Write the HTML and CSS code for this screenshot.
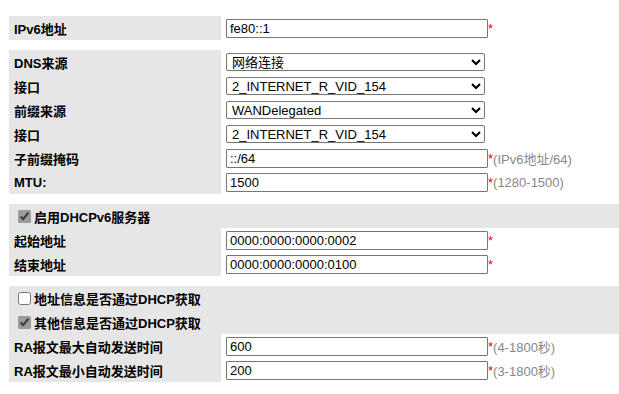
FILE: index.html
```html
<!DOCTYPE html>
<html lang="zh-CN">
<head>
    <meta charset="UTF-8">
    <title>IPv6 LAN</title>
    <link rel="stylesheet" href="styles.css">
</head>
<body>
    <div class="page">
        <table class="cfg">
            <tr>
                <td class="label">IPv6地址</td>
                <td class="value"><input type="text" class="txt" value="fe80::1"><span class="req">*</span></td>
            </tr>
        </table>

        <table class="cfg">
            <tr>
                <td class="label">DNS来源</td>
                <td class="value"><select class="sel"><option>网络连接</option></select></td>
            </tr>
            <tr>
                <td class="label">接口</td>
                <td class="value"><select class="sel"><option>2_INTERNET_R_VID_154</option></select></td>
            </tr>
            <tr>
                <td class="label">前缀来源</td>
                <td class="value"><select class="sel"><option>WANDelegated</option></select></td>
            </tr>
            <tr>
                <td class="label">接口</td>
                <td class="value"><select class="sel"><option>2_INTERNET_R_VID_154</option></select></td>
            </tr>
            <tr>
                <td class="label">子前缀掩码</td>
                <td class="value"><input type="text" class="txt" value="::/64"><span class="req">*</span><span class="hint">(IPv6地址/64)</span></td>
            </tr>
            <tr>
                <td class="label">MTU:</td>
                <td class="value"><input type="text" class="txt" value="1500"><span class="req">*</span><span class="hint">(1280-1500)</span></td>
            </tr>
        </table>

        <table class="cfg">
            <tr>
                <td class="head" colspan="2"><label><input type="checkbox" class="chk" checked>启用DHCPv6服务器</label></td>
            </tr>
            <tr>
                <td class="label">起始地址</td>
                <td class="value"><input type="text" class="txt" value="0000:0000:0000:0002"><span class="req">*</span></td>
            </tr>
            <tr>
                <td class="label">结束地址</td>
                <td class="value"><input type="text" class="txt" value="0000:0000:0000:0100"><span class="req">*</span></td>
            </tr>
        </table>

        <table class="cfg">
            <tr>
                <td class="head" colspan="2"><label><input type="checkbox" class="chk">地址信息是否通过DHCP获取</label></td>
            </tr>
            <tr>
                <td class="head" colspan="2"><label><input type="checkbox" class="chk" checked>其他信息是否通过DHCP获取</label></td>
            </tr>
            <tr>
                <td class="label">RA报文最大自动发送时间</td>
                <td class="value"><input type="text" class="txt" value="600"><span class="req">*</span><span class="hint">(4-1800秒)</span></td>
            </tr>
            <tr>
                <td class="label">RA报文最小自动发送时间</td>
                <td class="value"><input type="text" class="txt" value="200"><span class="req">*</span><span class="hint">(3-1800秒)</span></td>
            </tr>
        </table>

        <div class="footer">
            <button class="btn" aria-label="应用"></button>
        </div>
    </div>
</body>
</html>
```

FILE: styles.css
```css
body {
    margin: 0;
    padding: 0;
    background-color: #fff;
    font-family: "Liberation Sans", Arial, "Noto Sans CJK SC", sans-serif;
    font-size: 13px;
    color: #000;
    overflow: hidden;
}

.page {
    padding: 16px 0 0 9px;
}

.cfg {
    width: 100%;
    border-collapse: collapse;
    margin-bottom: 10px;
}

.cfg td {
    height: 24px;
    padding: 0;
    vertical-align: middle;
}

.label {
    width: 212px;
    padding-left: 5px !important;
    box-sizing: border-box;
    background-color: #e6e6e6;
    font-weight: bold;
    white-space: nowrap;
}

.value {
    padding-left: 5px !important;
    white-space: nowrap;
}

.head {
    padding-left: 5px !important;
    background-color: #e6e6e6;
    font-weight: bold;
}

.head label {
    display: flex;
    align-items: center;
}

.chk {
    width: 13px;
    height: 13px;
    margin: 0 3px 0 4px;
    accent-color: #9c9c9c;
}

.txt {
    width: 262px;
    height: 19px;
    box-sizing: border-box;
    padding: 0 3px;
    border: 1px solid #767676;
    border-radius: 1px;
    font-family: "Liberation Sans", Arial, "Noto Sans CJK SC", sans-serif;
    font-size: 13px;
    color: #000;
    vertical-align: middle;
}

.sel {
    width: 259px;
    height: 18px;
    box-sizing: border-box;
    padding: 0 0 0 1px;
    border: 1px solid #767676;
    border-radius: 2px;
    background-color: #fff;
    font-family: "Liberation Sans", Arial, "Noto Sans CJK SC", sans-serif;
    font-size: 13px;
    color: #000;
    vertical-align: middle;
}

.req {
    color: #f00;
    vertical-align: middle;
}

.hint {
    color: #888;
    vertical-align: middle;
}

.footer {
    padding: 7px 0 0 594px;
}

.btn {
    display: block;
    width: 40px;
    height: 24px;
    border: 1px solid #999;
    border-radius: 3px;
    background-color: #f4f4f4;
}
```
